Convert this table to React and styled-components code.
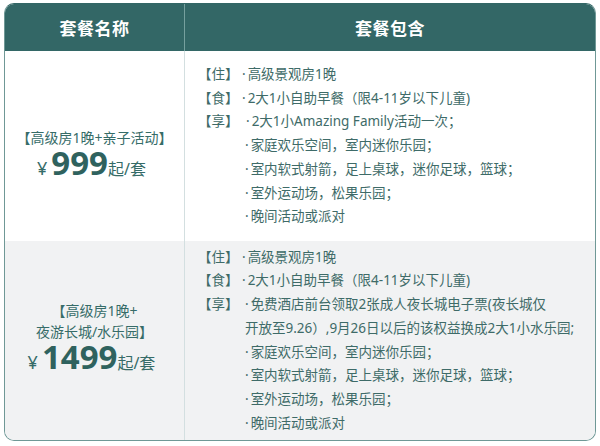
import React from 'react';
import styled, { createGlobalStyle } from 'styled-components';

const GlobalStyle = createGlobalStyle`
  html, body {
    margin: 0;
    padding: 0;
    background: #ffffff;
  }
  body {
    font-family: "Noto Sans", "Noto Sans CJK SC", sans-serif;
  }
`;

const packages = [
  {
    name: ['【高级房1晚+亲子活动】'],
    price: '999',
    height: 190,
    shift: 12,
    shade: false,
    items: [
      { label: '【住】', lines: [{ text: '·高级景观房1晚' }] },
      { label: '【食】', lines: [{ text: '·2大1小自助早餐（限4-11岁以下儿童)' }] },
      {
        label: '【享】',
        lines: [
          { text: '·2大1小Amazing Family活动一次；', indent: 4 },
          { text: '·家庭欢乐空间，室内迷你乐园；', indent: 3 },
          { text: '·室内软式射箭，足上桌球，迷你足球，篮球；', indent: 3 },
          { text: '·室外运动场，松果乐园；', indent: 3 },
          { text: '·晚间活动或派对', indent: 3 },
        ],
      },
    ],
  },
  {
    name: ['【高级房1晚+', '夜游长城/水乐园】'],
    price: '1499',
    height: 199,
    shift: -10,
    shade: true,
    items: [
      { label: '【住】', lines: [{ text: '·高级景观房1晚' }] },
      { label: '【食】', lines: [{ text: '·2大1小自助早餐（限4-11岁以下儿童)' }] },
      {
        label: '【享】',
        lines: [
          { text: '·免费酒店前台领取2张成人夜长城电子票(夜长城仅', indent: 3 },
          { text: '开放至9.26）,9月26日以后的该权益换成2大1小水乐园;', indent: 3 },
          { text: '·家庭欢乐空间，室内迷你乐园；', indent: 3 },
          { text: '·室内软式射箭，足上桌球，迷你足球，篮球；', indent: 3 },
          { text: '·室外运动场，松果乐园；', indent: 3 },
          { text: '·晚间活动或派对', indent: 3 },
        ],
      },
    ],
  },
];

const renderLine = (text) =>
  text.startsWith('·') ? (
    <>
      <Dot>·</Dot>
      {text.slice(1)}
    </>
  ) : (
    text
  );

const App = () => {
  return (
    <>
      <GlobalStyle />
      <Page>
        <Table>
          <HeadCell divider>套餐名称</HeadCell>
          <HeadCell>套餐包含</HeadCell>
          {packages.map((p, i) => (
            <React.Fragment key={i}>
              <NameCell shade={p.shade} shift={p.shift} style={{ height: p.height }}>
                <NameText>
                  {p.name.map((n, j) => (
                    <div key={j}>{n}</div>
                  ))}
                </NameText>
                <Price>
                  <Yen>¥</Yen>
                  <Num>{p.price}</Num>
                  <Unit>起/套</Unit>
                </Price>
              </NameCell>
              <DetailCell shade={p.shade}>
                <ItemList>
                  {p.items.map((item, k) => (
                    <React.Fragment key={k}>
                      <Label>{item.label}</Label>
                      <Lines>
                        {item.lines.map((l, m) => (
                          <Line key={m} indent={l.indent || 0}>
                            {renderLine(l.text)}
                          </Line>
                        ))}
                      </Lines>
                    </React.Fragment>
                  ))}
                </ItemList>
              </DetailCell>
            </React.Fragment>
          ))}
        </Table>
      </Page>
    </>
  );
};

const Page = styled.div`
  padding: 3px 0 0 4px;
`;

const Table = styled.div`
  width: 592px;
  box-sizing: border-box;
  display: grid;
  grid-template-columns: 180px 1fr;
  border: 1px solid #6f9896;
  border-top-color: #336766;
  border-radius: 10px;
  overflow: hidden;
`;

const HeadCell = styled.div`
  height: 47px;
  background: #336766;
  color: #ffffff;
  font-size: 17px;
  font-weight: 700;
  letter-spacing: 0.5px;
  display: flex;
  align-items: center;
  justify-content: center;
  border-right: ${(p) => (p.divider ? '1px solid #76a09e' : 'none')};
`;

const NameCell = styled.div`
  box-sizing: border-box;
  background: ${(p) => (p.shade ? '#f1f2f3' : '#ffffff')};
  border-right: 1px solid #d3dfe0;
  display: flex;
  flex-direction: column;
  align-items: center;
  justify-content: center;
  padding-top: ${(p) => (p.shift > 0 ? p.shift : 0)}px;
  padding-bottom: ${(p) => (p.shift < 0 ? -p.shift : 0)}px;
  color: #366c68;
  text-align: center;
`;

const NameText = styled.div`
  font-size: 14px;
  line-height: 21px;
`;

const Price = styled.div`
  display: flex;
  align-items: baseline;
  justify-content: center;
  margin-right: 6px;
  height: 30px;
`;

const Yen = styled.span`
  font-size: 18px;
  line-height: 20px;
  margin-right: 4px;
`;

const Num = styled.span`
  display: inline-block;
  height: 30px;
  font-size: 33px;
  font-weight: 700;
  color: #2f625e;
  line-height: 30px;
`;

const Unit = styled.span`
  font-size: 16px;
  line-height: 20px;
`;

const DetailCell = styled.div`
  background: ${(p) => (p.shade ? '#f1f2f3' : '#ffffff')};
  display: flex;
  align-items: center;
  padding-left: 13px;
`;

const ItemList = styled.div`
  display: grid;
  grid-template-columns: 44px 1fr;
  color: #3e6b68;
  font-size: 13.5px;
  line-height: 23.7px;
`;

const Label = styled.div`
  white-space: nowrap;
`;

const Lines = styled.div`
  display: flex;
  flex-direction: column;
`;

const Line = styled.div`
  white-space: nowrap;
  padding-left: ${(p) => p.indent}px;
`;

const Dot = styled.span`
  margin-right: 2px;
`;

export default App;
